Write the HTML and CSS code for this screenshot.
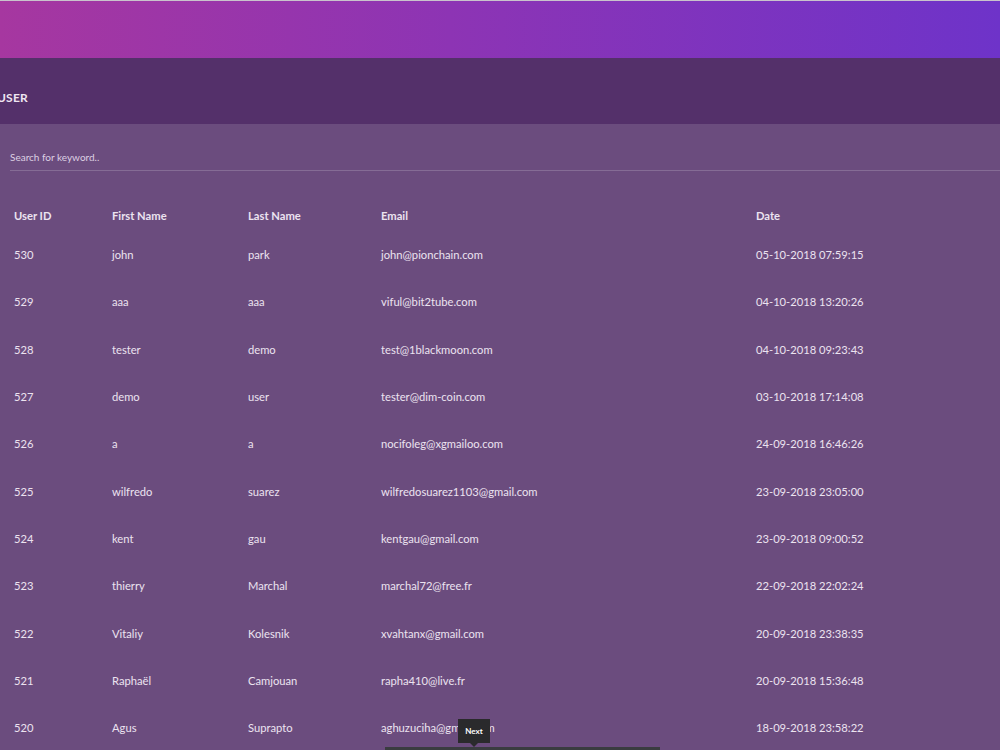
FILE: index.html
```html
<!DOCTYPE html>
<html>
<head>
<meta charset="utf-8">
<link rel="stylesheet" href="styles.css">
</head>
<body>
<div class="topline"></div>
<header class="hero"></header>
<div class="titlebar"><h1 class="title">USER</h1></div>
<main class="content">
  <div class="search">Search for keyword..</div>
  <div class="table">
    <div class="row head"><span>User ID</span><span>First Name</span><span>Last Name</span><span>Email</span><span>Date</span></div>
    <div class="row"><span>530</span><span>john</span><span>park</span><span>john@pionchain.com</span><span>05-10-2018 07:59:15</span></div>
    <div class="row"><span>529</span><span>aaa</span><span>aaa</span><span>viful@bit2tube.com</span><span>04-10-2018 13:20:26</span></div>
    <div class="row"><span>528</span><span>tester</span><span>demo</span><span>test@1blackmoon.com</span><span>04-10-2018 09:23:43</span></div>
    <div class="row"><span>527</span><span>demo</span><span>user</span><span>tester@dim-coin.com</span><span>03-10-2018 17:14:08</span></div>
    <div class="row"><span>526</span><span>a</span><span>a</span><span>nocifoleg@xgmailoo.com</span><span>24-09-2018 16:46:26</span></div>
    <div class="row"><span>525</span><span>wilfredo</span><span>suarez</span><span>wilfredosuarez1103@gmail.com</span><span>23-09-2018 23:05:00</span></div>
    <div class="row"><span>524</span><span>kent</span><span>gau</span><span>kentgau@gmail.com</span><span>23-09-2018 09:00:52</span></div>
    <div class="row"><span>523</span><span>thierry</span><span>Marchal</span><span>marchal72@free.fr</span><span>22-09-2018 22:02:24</span></div>
    <div class="row"><span>522</span><span>Vitaliy</span><span>Kolesnik</span><span>xvahtanx@gmail.com</span><span>20-09-2018 23:38:35</span></div>
    <div class="row"><span>521</span><span>Raphaël</span><span>Camjouan</span><span>rapha410@live.fr</span><span>20-09-2018 15:36:48</span></div>
    <div class="row"><span>520</span><span>Agus</span><span>Suprapto</span><span>aghuzuciha@gmail.com</span><span>18-09-2018 23:58:22</span></div>
  </div>
</main>
<div class="tooltip">Next</div>
<div class="pager"></div>
</body>
</html>
```

FILE: styles.css
```css
html, body {
  margin: 0;
  padding: 0;
  height: 100%;
  overflow: hidden;
}
body {
  background: #6b4c7e;
  font-family: Lato, "Open Sans", sans-serif;
  font-size: 11.2px;
  color: #ece3f0;
}
.topline {
  height: 1px;
  background: #c9c3cc;
}
.hero {
  height: 57px;
  background: linear-gradient(90deg, #a637a0 0%, #8d34b4 45%, #6e33c9 100%);
}
.titlebar {
  height: 66px;
  box-sizing: border-box;
  padding-top: 12px;
  background: #54306a;
  display: flex;
  align-items: center;
}
.title {
  margin: 0 0 0 -3px;
  font-size: 12px;
  font-weight: 700;
  color: #efe6f2;
  letter-spacing: 0.2px;
}
.content {
  padding: 21px 0 0 10px;
}
.search {
  height: 25px;
  line-height: 25px;
  font-size: 10px;
  color: #ddd0e3;
  border-bottom: 1px solid rgba(255, 255, 255, 0.18);
}
.table {
  margin-top: 29px;
}
.row {
  display: grid;
  grid-template-columns: 98px 136px 133px 375px 1fr;
  height: 47.3px;
  align-items: center;
  padding-left: 4px;
}
.row.head {
  height: 31px;
  font-weight: 700;
}
.tooltip {
  position: absolute;
  left: 458px;
  top: 719px;
  width: 32px;
  height: 24px;
  background: #2a2a2c;
  color: #fff;
  font-size: 8px;
  font-weight: 700;
  display: flex;
  align-items: center;
  justify-content: center;
}
.tooltip::after {
  content: "";
  position: absolute;
  left: 12px;
  bottom: -4px;
  border-left: 4px solid transparent;
  border-right: 4px solid transparent;
  border-top: 4px solid #2a2a2c;
}
.pager {
  position: absolute;
  left: 385px;
  top: 747px;
  width: 275px;
  height: 10px;
  background: #3a3c40;
}
```
